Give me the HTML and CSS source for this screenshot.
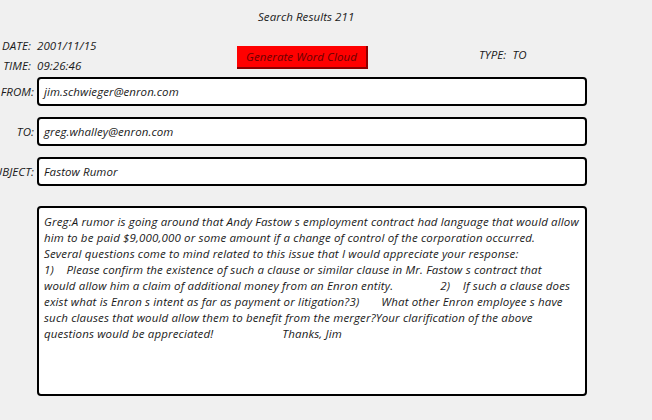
FILE: index.html
```html
<!DOCTYPE html>
<html>
<head>
<meta charset="utf-8">
<link rel="stylesheet" href="styles.css">
</head>
<body>
<div class="page">
  <div class="title">Search Results 211</div>
  <div class="meta">
    <div class="dt">
      <div class="dt-row"><span class="dt-lbl">DATE:</span><span class="dt-val">2001/11/15</span></div>
      <div class="dt-row"><span class="dt-lbl">TIME:</span><span class="dt-val">09:26:46</span></div>
    </div>
    <div class="btn-cell"><button class="cloud">Generate Word Cloud</button></div>
    <div class="type">TYPE:&nbsp; TO</div>
  </div>
  <div class="fields">
    <div class="lbl"><span>FROM:</span></div>
    <div class="box">jim.schwieger@enron.com</div>
    <div class="lbl"><span>TO:</span></div>
    <div class="box">greg.whalley@enron.com</div>
    <div class="lbl"><span>SUBJECT:</span></div>
    <div class="box">Fastow Rumor</div>
    <div class="lbl"></div>
    <div class="box body"><div class="body-text">Greg:A rumor is going around that Andy Fastow s employment contract had language that would allow
him to be paid $9,000,000 or some amount if a change of control of the corporation occurred.
Several questions come to mind related to this issue that I would appreciate your response:
1)    Please confirm the existence of such a clause or similar clause in Mr. Fastow s contract that
would allow him a claim of additional money from an Enron entity.               2)    If such a clause does
exist what is Enron s intent as far as payment or litigation?3)       What other Enron employee s have
such clauses that would allow them to benefit from the merger?Your clarification of the above
questions would be appreciated!                      Thanks, Jim</div></div>
  </div>
</div>
</body>
</html>
```
FILE: styles.css
```css
html, body {
  margin: 0;
  padding: 0;
  background: #f0f0f0;
}
body {
  font-family: "Open Sans", "DejaVu Sans", sans-serif;
  font-style: italic;
  font-size: 11.5px;
  letter-spacing: 0.08px;
  color: #1a1a1a;
  overflow: hidden;
}
.page {
  width: 652px;
  height: 420px;
}
.title {
  padding: 9px 0 0 258px;
  height: 35px;
  line-height: 16px;
  box-sizing: border-box;
}
.meta {
  display: grid;
  grid-template-columns: 237px 131px 1fr;
  height: 42px;
}
.dt {
  display: flex;
  flex-direction: column;
}
.dt-row {
  display: flex;
  height: 20px;
  align-items: center;
}
.dt-lbl {
  width: 31px;
  display: flex;
  justify-content: flex-end;
  white-space: nowrap;
}
.dt-val {
  margin-left: 6px;
}
.btn-cell {
  padding-top: 11px;
}
.cloud {
  display: block;
  width: 131px;
  height: 23px;
  margin: 0;
  padding: 0;
  background: #ff0000;
  border: 0;
  border-right: 2px solid #8a0000;
  border-bottom: 2px solid #8a0000;
  color: #6a0000;
  font-family: inherit;
  font-style: italic;
  font-size: 11.5px;
  letter-spacing: 0.08px;
}
.type {
  padding: 12px 0 0 111px;
  line-height: 16px;
}
.fields {
  display: grid;
  grid-template-columns: 34px 550px;
  grid-template-rows: 29px 29px 29px 190px;
  column-gap: 3px;
  row-gap: 11px;
}
.fields .lbl {
  display: flex;
  justify-content: flex-end;
  align-items: center;
  white-space: nowrap;
}
.box {
  background: #fff;
  border: 2px solid #000;
  border-radius: 4px;
  box-sizing: border-box;
  display: flex;
  align-items: center;
  padding: 0 5px;
}
.fields .box.body {
  margin-top: 9px;
  height: 190px;
  align-items: flex-start;
  padding: 6px 5px;
}
.body-text {
  white-space: pre;
  line-height: 16px;
  letter-spacing: 0.15px;
}
```
